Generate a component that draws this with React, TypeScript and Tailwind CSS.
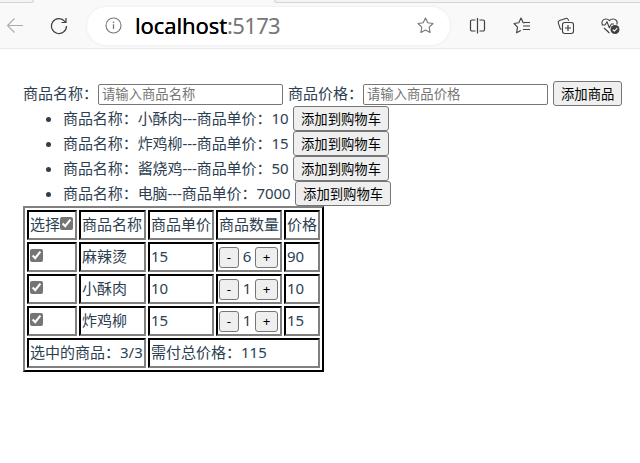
import React, { useState } from 'react';

const goods = [
  { name: '小酥肉', price: 10 },
  { name: '炸鸡柳', price: 15 },
  { name: '酱烧鸡', price: 50 },
  { name: '电脑', price: 7000 },
];

const initialCart = [
  { name: '麻辣烫', price: 15, count: 6, checked: true },
  { name: '小酥肉', price: 10, count: 1, checked: true },
  { name: '炸鸡柳', price: 15, count: 1, checked: true },
];

const buttonClass =
  'h-[25px] shrink-0 whitespace-nowrap rounded-[3px] border border-[#767676] bg-[#efefef] px-[7px] pt-px text-[13.333px] leading-[21px] text-black';
const inputClass =
  'h-[21px] w-[185px] shrink-0 rounded-[2px] border border-[#767676] bg-white px-[3px] pb-[2px] text-[13.333px] leading-[17px] text-black placeholder:text-[#757575]';
const cellClass =
  'h-[30px] border-2 border-t-black border-l-black border-r-[#808080] border-b-[#808080] px-px pt-px pb-[3px] text-left align-middle font-normal leading-[22px] whitespace-nowrap';

function Check({ checked, onChange }: { checked: boolean; onChange: () => void }) {
  return (
    <input
      type="checkbox"
      checked={checked}
      onChange={onChange}
      className="block size-[13px] shrink-0 accent-[#757575]"
    />
  );
}

function Stepper({ label, onClick, className }: { label: string; onClick: () => void; className: string }) {
  return (
    <button
      onClick={onClick}
      className={`h-[21px] shrink-0 rounded-[3px] border border-[#767676] bg-[#efefef] pb-px text-center text-[13.333px] leading-[18px] text-black ${className}`}
    >
      {label}
    </button>
  );
}

function BrowserBar() {
  return (
    <header className="h-[49px] border-b border-[#e9e9e9] bg-[#f9f9f9]">
      <div className="flex h-[3px]">
        <div className="w-[34px] rounded-br-[3px] border-r border-b border-[#d4d4d4] bg-[#f3f3f3]" />
        <div className="w-[240px]" />
        <div className="flex-1 rounded-bl-[3px] border-b border-l border-[#d4d4d4] bg-[#f3f3f3]" />
      </div>
      <div className="flex h-[45px] items-center">
        <svg className="ml-[6px] size-[18px] shrink-0" viewBox="0 0 18 18" fill="none" stroke="#ababab" strokeWidth="1.1">
          <path d="M17 8.5H1.5M8.5 1.5l-7 7 7 7" />
        </svg>
        <svg className="ml-[26px] size-[18px] shrink-0" viewBox="0 0 18 18" fill="none" stroke="#404040" strokeWidth="1.2">
          <path d="M16.5 9A7.5 7.5 0 1 1 14.8 4.3L16 5.5M16 1V5.5h-4.5" />
        </svg>
        <div className="ml-[19px] flex h-[38px] w-[363px] shrink-0 items-center rounded-full bg-white pl-[18px] shadow-[0_0_3px_rgba(0,0,0,0.08)]">
          <svg className="size-[17px] shrink-0" viewBox="0 0 17 17" fill="none" stroke="#777" strokeWidth="1.1">
            <circle cx="8.5" cy="8.5" r="7.5" />
            <path d="M8.5 7.3v4.8M8.5 4.6v1.3" strokeWidth="1.3" />
          </svg>
          <span className="mb-[2px] ml-[13px] w-[271px] text-[22px] leading-[30px] tracking-[-0.1px] text-black [text-shadow:0_0_0.4px_black]">
            localhost<span className="tracking-[-0.65px] text-[#767676] [text-shadow:none]">:5173</span>
          </span>
          <svg className="ml-[11px] size-[17px] shrink-0" viewBox="0 0 17 17" fill="none" stroke="#777" strokeWidth="1.1" strokeLinejoin="round">
            <path d="m8.5 1 2.3 4.8 5.2.7-3.8 3.7.9 5.3-4.6-2.5-4.6 2.5.9-5.3L1 6.5l5.2-.7Z" />
          </svg>
        </div>
        <svg className="ml-[19px] size-[18px] shrink-0" viewBox="0 0 18 18" fill="none" stroke="#404040" strokeWidth="1.2">
          <path d="M6.5 3H3a1.5 1.5 0 0 0-1.5 1.5v8A1.5 1.5 0 0 0 3 14h3.5M10.5 3H14a1.5 1.5 0 0 1 1.5 1.5v8A1.5 1.5 0 0 1 14 14h-3.5M8.5 1v15.5" />
        </svg>
        <svg className="ml-[26px] size-[18px] shrink-0" viewBox="0 0 18 18" fill="none" stroke="#404040" strokeWidth="1.1" strokeLinejoin="round">
          <path d="M11.5 6 10.2 5.8 8 1 5.8 5.8 1 6.5l3.5 3.7-.9 5.6L7.8 13.5M11 5.5h6M10 9h7M10 12.5h7" />
        </svg>
        <svg className="ml-[26px] size-[18px] shrink-0" viewBox="0 0 18 18" fill="none" stroke="#404040" strokeWidth="1.1" strokeLinejoin="round">
          <path d="M4.5 12.5 3.2 11.7 1.3 5.8c-.3-1 .1-2 1.2-2.4l6.3-2c1-.3 2 .1 2.4 1.2l.5 1.2" />
          <rect x="5.5" y="5.5" width="11" height="11" rx="2.2" />
          <path d="M11 8v6M8 11h6" strokeWidth="1.2" />
        </svg>
        <svg className="ml-[26px] h-[18px] w-[19px] shrink-0" viewBox="0 0 19 18" fill="none" stroke="#404040" strokeWidth="1.1" strokeLinejoin="round">
          <path d="M1.4 8C0 4.5 2 2 5 2c1.8 0 2.7.7 3.5 1.7C9.3 2.7 10.2 2 12 2c3 0 5 2.5 3.7 5.5M1 8h3l2-3.2 2.3 6L10.4 7H13M3 11l5.4 5" />
          <circle cx="14" cy="12.5" r="4.5" fill="#404040" stroke="none" />
          <path d="m11.8 12.6 1.5 1.5 3-3" stroke="#fff" />
        </svg>
      </div>
    </header>
  );
}

export default function App() {
  const [cart, setCart] = useState(initialCart);
  const selected = cart.filter((item) => item.checked);
  const all = selected.length === cart.length;
  const total = selected.reduce((sum, item) => sum + item.price * item.count, 0);

  const update = (index: number, change: Partial<(typeof initialCart)[number]>) =>
    setCart(cart.map((item, i) => (i === index ? { ...item, ...change } : item)));

  return (
    <div className="min-h-[463px] overflow-hidden bg-white font-['Noto_Sans','Noto_Sans_CJK_SC',sans-serif] text-[15px] leading-[25px] text-[#2c3e50]">
      <BrowserBar />
      <main className="pt-[32px] pl-[23px]">
        <div className="flex h-[25px] items-center whitespace-nowrap">
          <span className="w-[75px]">商品名称：</span>
          <input className={`${inputClass} mt-[2px]`} placeholder="请输入商品名称" />
          <span className="ml-[5px] w-[75px]">商品价格：</span>
          <input className={`${inputClass} mt-[2px]`} placeholder="请输入商品价格" />
          <button className={`${buttonClass} ml-[5px]`}>添加商品</button>
        </div>
        <ul className="pl-[23px]">
          {goods.map((item) => (
            <li key={item.name} className="flex h-[25px] items-center">
              <span className="mt-px mr-[12px] size-[5px] rounded-full bg-[#2c3e50]" />
              <span className="mr-[4.6px] tracking-[-0.07px]">
                商品名称：{item.name}---商品单价：{item.price}
              </span>
              <button className={buttonClass}>添加到购物车</button>
            </li>
          ))}
        </ul>
        <table className="w-[301px] table-fixed border-separate border-spacing-[2px] border-2 border-t-[#808080] border-r-black border-b-black border-l-[#808080]">
          <colgroup>
            <col className="w-[50px]" />
            <col className="w-[67px]" />
            <col className="w-[66px]" />
            <col className="w-[66px]" />
            <col className="w-[36px]" />
          </colgroup>
          <tbody>
            <tr>
              <th className={cellClass}>
                <div className="flex">
                  选择
                  <div className="pt-[4px]">
                    <Check checked={all} onChange={() => setCart(cart.map((item) => ({ ...item, checked: !all })))} />
                  </div>
                </div>
              </th>
              <th className={cellClass}>商品名称</th>
              <th className={cellClass}>商品单价</th>
              <th className={cellClass}>商品数量</th>
              <th className={cellClass}>价格</th>
            </tr>
            {cart.map((item, index) => (
              <tr key={item.name}>
                <td className={cellClass}>
                  <div className="h-[22px] pt-[4px]">
                    <Check checked={item.checked} onChange={() => update(index, { checked: !item.checked })} />
                  </div>
                </td>
                <td className={cellClass}>{item.name}</td>
                <td className={cellClass}>{item.price}</td>
                <td className={cellClass}>
                  <div className="flex h-[22px] items-start">
                    <Stepper label="-" className="mt-[2px] w-[20px]" onClick={() => update(index, { count: Math.max(1, item.count - 1) })} />
                    <span className="w-[16px] text-center">{item.count}</span>
                    <Stepper label="+" className="mt-[2px] w-[23px]" onClick={() => update(index, { count: item.count + 1 })} />
                  </div>
                </td>
                <td className={cellClass}>{item.price * item.count}</td>
              </tr>
            ))}
            <tr>
              <td colSpan={2} className={cellClass}>
                选中的商品：{selected.length}/{cart.length}
              </td>
              <td colSpan={3} className={cellClass}>
                需付总价格：{total}
              </td>
            </tr>
          </tbody>
        </table>
      </main>
    </div>
  );
}
